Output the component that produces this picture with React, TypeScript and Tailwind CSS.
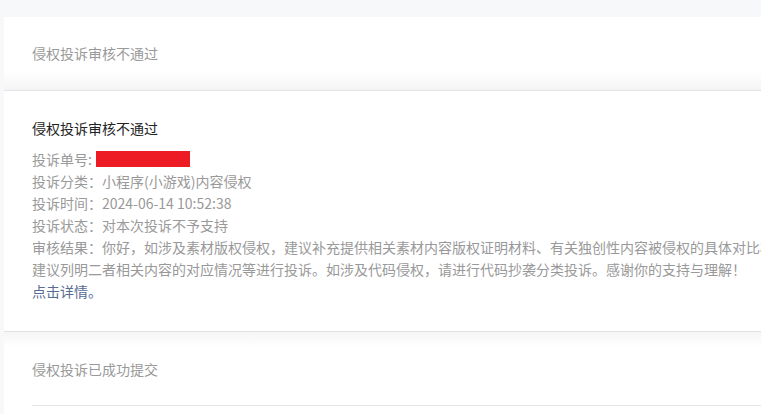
const font = { fontFamily: '"Noto Sans CJK SC", "Noto Sans", sans-serif' };

const rows: { label: string; value: string }[] = [
  { label: "投诉分类：", value: "小程序(小游戏)内容侵权" },
  { label: "投诉时间：", value: "2024-06-14 10:52:38" },
  { label: "投诉状态：", value: "对本次投诉不予支持" },
];

const result =
  "你好，如涉及素材版权侵权，建议补充提供相关素材内容版权证明材料、有关独创性内容被侵权的具体对比材料，建议列明二者相关内容的对应情况等进行投诉。如涉及代码侵权，请进行代码抄袭分类投诉。感谢你的支持与理解！";

export default function App() {
  return (
    <div
      className="w-[761px] h-[414px] overflow-hidden bg-[#f7f8fa] pt-[17px] pl-[4px]"
      style={font}
    >
      <div className="w-[900px] bg-white">
        {/* collapsed item */}
        <div className="h-[73px] pt-[26px] bg-gradient-to-b from-white from-75% to-[#f4f4f6]">
          <div className="pl-[28px] text-[14px] leading-[20px] text-[#999]">
            侵权投诉审核不通过
          </div>
        </div>
        <div className="h-px bg-[#e4e4e6]" />

        {/* expanded item */}
        <div className="pl-[28px] pt-[26px] h-[240px]">
          <div className="text-[14px] leading-[22px] text-[#222]">侵权投诉审核不通过</div>
          <div className="mt-[9px] w-[776px] text-[14px] leading-[22px] text-[#999]">
            <div className="flex items-center">
              <span>投诉单号:</span>
              <span className="ml-[4px] inline-block w-[94px] h-[16px] bg-[#ed1c24]" />
            </div>
            {rows.map((r) => (
              <div key={r.label}>
                {r.label}
                {r.value}
              </div>
            ))}
            <div>
              审核结果：{result}
            </div>
            <div className="text-[#576b95]">点击详情。</div>
          </div>
        </div>
        <div className="h-px bg-[#e2e2e4]" />

        {/* collapsed item */}
        <div className="h-[73px] pt-[27px] bg-gradient-to-b from-[#f5f5f6] to-white to-20%">
          <div className="pl-[28px] text-[14px] leading-[20px] text-[#999]">
            侵权投诉已成功提交
          </div>
        </div>
        <div className="ml-[28px] h-px bg-[#e6e6e8]" />
        <div className="h-[20px]" />
      </div>
    </div>
  );
}
